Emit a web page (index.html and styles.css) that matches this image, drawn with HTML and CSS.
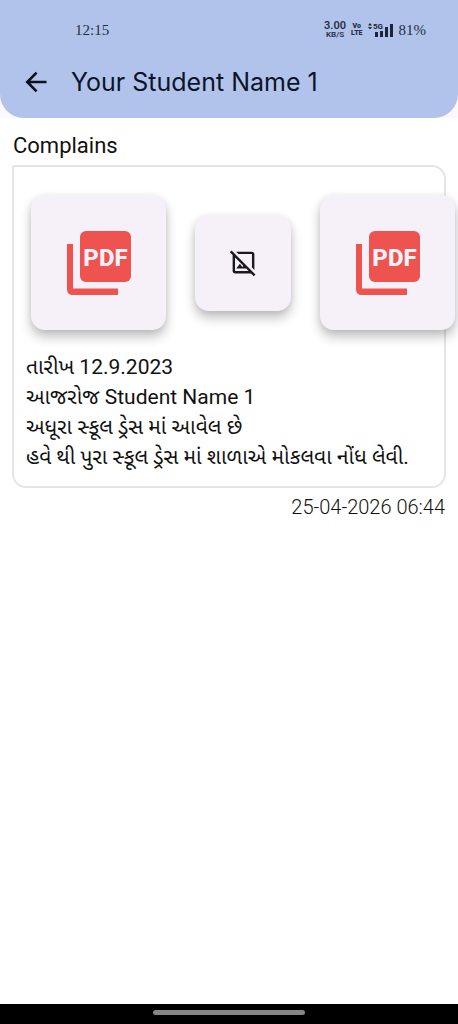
FILE: index.html
```
<!DOCTYPE html>
<html lang="gu">
<head>
<meta charset="utf-8">
<meta name="viewport" content="width=device-width, initial-scale=1">
<title>Complains</title>
<link rel="stylesheet" href="styles.css">
</head>
<body>
<div class="top">
  <header class="header">
    <div class="status">
      <span class="clock">12:15</span>
      <div class="indicators">
        <span class="stack"><span class="speed">3.00</span><span class="unit">KB/S</span></span>
        <span class="stack volte"><span>Vo</span><span>LTE</span></span>
        <svg class="signal" viewBox="0 0 26 16" role="img" aria-label="5G signal">
          <path d="M0 3.500L2 1l2 2.500zM0 5h4L2 7.500z"/>
          <text x="5" y="7" class="signal-text">5G</text>
          <path d="M7 10h3v5H7zM12 9h3v6h-3zM17 5h3v10h-3zM22 2h3v13h-3z"/>
        </svg>
        <span class="battery">81%</span>
      </div>
    </div>
    <div class="bar">
      <button class="back" type="button" aria-label="Back">
        <svg viewBox="0 0 24 24"><path d="M21 12H4.500M12.500 4L4.500 12l8 8"/></svg>
      </button>
      <h1 class="title">Your Student Name 1</h1>
    </div>
  </header>
</div>
<main class="main">
  <h2 class="heading">Complains</h2>
  <article class="card">
    <div class="files">
      <button class="file" type="button" aria-label="Open PDF">
        <svg class="pdf" viewBox="0 0 76 76"><rect x="19" y="6" width="51" height="51" rx="6"/><path d="M6 19h6v44.500h45V70H12q-6 0-6-6z"/><text x="44.500" y="41" class="pdf-text">PDF</text></svg>
      </button>
      <button class="file small" type="button" aria-label="Image unavailable">
        <svg class="no-image" viewBox="0 0 24 24"><path d="M21.900 21.900l-8.490-8.490-9.820-9.820L2.100 2.100.69 3.510 3 5.830V19c0 1.100.9 2 2 2h13.170l2.310 2.310 1.420-1.410zM5 19V7.830l6.840 6.840-.84 1.050L9 13l-3 4h8.170l2 2H5zM7.830 5l-2-2H19c1.100 0 2 .9 2 2v13.170l-2-2V5H7.830z"/></svg>
      </button>
      <button class="file" type="button" aria-label="Open PDF">
        <svg class="pdf" viewBox="0 0 76 76"><rect x="19" y="6" width="51" height="51" rx="6"/><path d="M6 19h6v44.500h45V70H12q-6 0-6-6z"/><text x="44.500" y="41" class="pdf-text">PDF</text></svg>
      </button>
    </div>
    <p class="message">તારીખ 12.9.2023<br>આજરોજ Student Name 1<br>અધૂરા સ્કૂલ ડ્રેસ માં આવેલ છે<br>હવે થી પુરા સ્કૂલ ડ્રેસ માં શાળાએ મોકલવા નોંધ લેવી.</p>
  </article>
  <time class="date" datetime="2026-04-25T06:44">25-04-2026 06:44</time>
</main>
<footer class="nav"><span class="handle"></span></footer>
</body>
</html>
```
FILE: styles.css
```
* { box-sizing: border-box; }
body {
  margin: 0;
  min-height: 100vh;
  display: flex;
  flex-direction: column;
  background: #fff;
  color: #111;
  font-family: Roboto, "Noto Sans Gujarati", "Noto Sans", sans-serif;
  overflow-x: hidden;
}
.top { background: #fdf7ff; }
.header {
  background: #b1c3eb;
  border-radius: 0 0 24px 24px;
  padding: 18px 32px 12px 20px;
}
.status {
  display: flex;
  justify-content: space-between;
  align-items: center;
  height: 24px;
  padding-left: 55px;
  color: #252e45;
}
.clock, .battery { font-family: "Liberation Serif", serif; font-size: 15px; }
.indicators { display: flex; align-items: center; gap: 5px; }
.stack {
  display: flex;
  flex-direction: column;
  align-items: center;
}
.speed { font-size: 11px; line-height: 10px; font-weight: 600; }
.unit { font-size: 8px; line-height: 8px; font-weight: 600; }
.volte { font-size: 7px; font-weight: 900; line-height: 7px; }
.signal { width: 26px; height: 16px; fill: #1c2438; }
.signal-text { font: 700 8px Roboto, sans-serif; }
.bar { display: flex; align-items: center; gap: 19px; height: 48px; margin-top: 16px; }
.back {
  width: 32px;
  height: 32px;
  padding: 2px;
  border: 0;
  background: none;
}
.back svg { display: block; width: 28px; height: 28px; fill: none; stroke: #0b1020; stroke-width: 2.2; }
.title {
  margin: 0;
  font: 400 25px/32px Inter, sans-serif;
  color: #0b1428;
  white-space: nowrap;
}
.main { flex: 1; padding: 12px 12px 0; }
.heading { margin: 0; padding-left: 1px; font-size: 22px; line-height: 32px; font-weight: 400; }
.card {
  margin-top: 3px;
  border: 2px solid #e5e5e5;
  border-radius: 2px 14px 14px 14px;
  padding: 28px 12px 14px;
}
.files { display: flex; align-items: center; gap: 29px; padding-left: 5px; }
.file {
  flex: none;
  display: grid;
  place-items: center;
  width: 135px;
  height: 135px;
  padding: 0;
  border: 0;
  border-radius: 14px;
  background: #f6f1f9;
  box-shadow: 0 7px 12px rgba(0, 0, 0, .24), 0 1px 6px rgba(0, 0, 0, .08);
}
.small { width: 96px; height: 96px; }
.pdf { width: 76px; height: 76px; fill: #ee5350; }
.pdf-text { font: 800 24px Roboto, sans-serif; fill: #f6f1f9; text-anchor: middle; }
.no-image { width: 29px; height: 29px; fill: #1a1a1e; }
.message { margin: 22px 0 0; font-size: 21px; line-height: 30px; white-space: nowrap; }
.date { display: block; margin-top: 4px; padding-right: 1px; text-align: right; font-size: 20px; line-height: 30px; font-weight: 300; }
.nav { display: flex; justify-content: center; height: 20px; padding-top: 6px; background: #000; }
.handle { width: 33%; height: 5px; border-radius: 3px; background: #858585; }
```
